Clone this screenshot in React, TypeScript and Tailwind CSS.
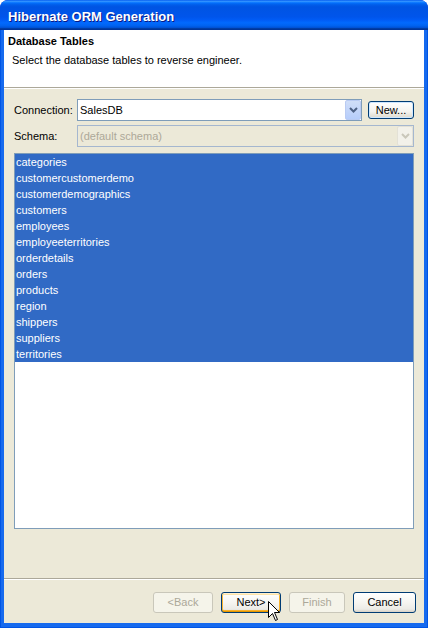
import React from "react";

const tables = [
  "categories",
  "customercustomerdemo",
  "customerdemographics",
  "customers",
  "employees",
  "employeeterritories",
  "orderdetails",
  "orders",
  "products",
  "region",
  "shippers",
  "suppliers",
  "territories",
];

function Chevron({ color }: { color: string }) {
  return (
    <svg width="9" height="6" viewBox="0 0 9 6">
      <polyline points="1,1 4.5,4.5 8,1" fill="none" stroke={color} strokeWidth="2" />
    </svg>
  );
}

function XPButton({
  label,
  disabled,
  focused,
  width,
}: {
  label: string;
  disabled?: boolean;
  focused?: boolean;
  width: string;
}) {
  if (disabled) {
    return (
      <div
        className={`${width} h-[21px] rounded-[3px] border border-[#c9c7ba] bg-[#f5f4ea] text-[#aca899] flex items-center justify-center text-[11px]`}
      >
        {label}
      </div>
    );
  }
  return (
    <div
      className={`${width} h-[21px] rounded-[3px] border border-[#003c74] bg-[linear-gradient(to_bottom,#ffffff_0%,#f6f5f1_50%,#ecebe6_85%,#d6d0c5_100%)] text-black flex items-center justify-center text-[11px] ${
        focused ? "shadow-[inset_0_1px_0_#fff0cf,inset_0_-1px_0_#e59700,inset_1px_0_0_#f8b330,inset_-1px_0_0_#f8b330,inset_0_2px_0_#fde3a7,inset_0_-2px_0_#f8b330]" : ""
      }`}
    >
      {label}
    </div>
  );
}

export default function App() {
  return (
    <div className="w-[428px] h-[628px] font-['Liberation_Sans',Arial,sans-serif] text-[11px] text-black relative select-none">
      <div className="w-full h-full flex flex-col rounded-t-[8px] overflow-hidden bg-[#0831d9]">
        {/* Title bar */}
        <div className="h-[30px] shrink-0 bg-[linear-gradient(to_bottom,#0058ee_0%,#3593ff_4%,#288eff_6%,#127dff_8%,#036ffc_10%,#0262ee_14%,#0057e5_20%,#0054e3_24%,#0055eb_56%,#005bf5_66%,#026afe_76%,#0062ef_86%,#0052d6_92%,#0040ab_94%,#003092_100%)] flex items-center pl-[8px] pt-[4px]">
          <span className="text-white font-bold text-[13px] [text-shadow:1px_1px_0_#0a1883]">
            Hibernate ORM Generation
          </span>
        </div>
        {/* Frame */}
        <div className="flex-1 flex flex-col bg-[#0055e5] pl-[1px] pr-px pb-px">
          <div className="flex-1 flex flex-col bg-[#166aee] pl-[3px] pr-[3px] pb-[4px]">
            <div className="flex-1 flex flex-col bg-[#ece9d8]">
              {/* Header */}
              <div className="h-[57px] bg-white pt-[5px] shrink-0">
                <div className="pl-[4px] font-bold leading-[13px]">Database Tables</div>
                <div className="pl-[8px] mt-[6px] leading-[13px]">
                  Select the database tables to reverse engineer.
                </div>
              </div>
              <div className="h-px bg-[#aca899]" />
              <div className="h-px bg-white" />

              {/* Body */}
              <div className="flex-1 flex flex-col pt-[10px] pl-[10px] pr-[10px]">
                <div className="flex items-center h-[22px]">
                  <div className="w-[63px]">Connection:</div>
                  <div className="w-[285px] h-[22px] border border-[#7f9db9] bg-white flex items-center">
                    <div className="flex-1 pl-[2px]">SalesDB</div>
                    <div className="w-[16px] h-[20px] mr-0 rounded-[2px] bg-[linear-gradient(to_bottom,#d0def8,#b6cdfb)] border border-[#b9cbf3] flex items-center justify-center">
                      <Chevron color="#4d6185" />
                    </div>
                  </div>
                  <div className="ml-[6px] w-[46px] h-[18px] rounded-[3px] border border-[#003c74] bg-[linear-gradient(to_bottom,#ffffff_0%,#f4f3ee_60%,#dcd8cc_100%)] shadow-[inset_0_0_0_1px_#cee7ff] flex items-center justify-center text-[11px]">
                    New...
                  </div>
                </div>
                <div className="flex items-center h-[22px] mt-[4px]">
                  <div className="w-[63px] text-[#000]">Schema:</div>
                  <div className="flex-1 h-[22px] border border-[#a5b7cf] bg-[#ece9d8] flex items-center">
                    <div className="flex-1 pl-[2px] text-[#aca899]">(default schema)</div>
                    <div className="w-[16px] h-[20px] rounded-[2px] bg-[#f2f1ea] border border-[#e3e1d6] flex items-center justify-center">
                      <Chevron color="#c9c7ba" />
                    </div>
                  </div>
                </div>
                <div className="mt-[6px] h-[376px] border border-[#7f9db9] bg-white">
                  {tables.map((t) => (
                    <div key={t} className="h-[16px] bg-[#316ac5] text-white pl-px leading-[16px]">
                      {t}
                    </div>
                  ))}
                </div>
                <div className="flex-1" />
              </div>

              <div className="h-px bg-[#aca899]" />
              <div className="h-px bg-white" />
              <div className="h-[43px] shrink-0 flex justify-end items-start pt-[12px] pr-[8px] gap-[8px]">
                <XPButton label="<Back" disabled width="w-[60px]" />
                <XPButton label="Next>" focused width="w-[60px]" />
                <XPButton label="Finish" disabled width="w-[56px]" />
                <XPButton label="Cancel" width="w-[63px]" />
              </div>
            </div>
          </div>
        </div>
      </div>
      {/* Mouse cursor */}
      <svg className="absolute left-[268px] top-[601px]" width="13" height="21" viewBox="0 0 13 21">
        <path d="M0.5,0.5 L0.5,16.5 L4.5,12.5 L7.5,19.5 L9.5,18.5 L6.5,11.5 L11.5,11.5 Z" fill="white" stroke="black" strokeWidth="1" />
      </svg>
    </div>
  );
}
